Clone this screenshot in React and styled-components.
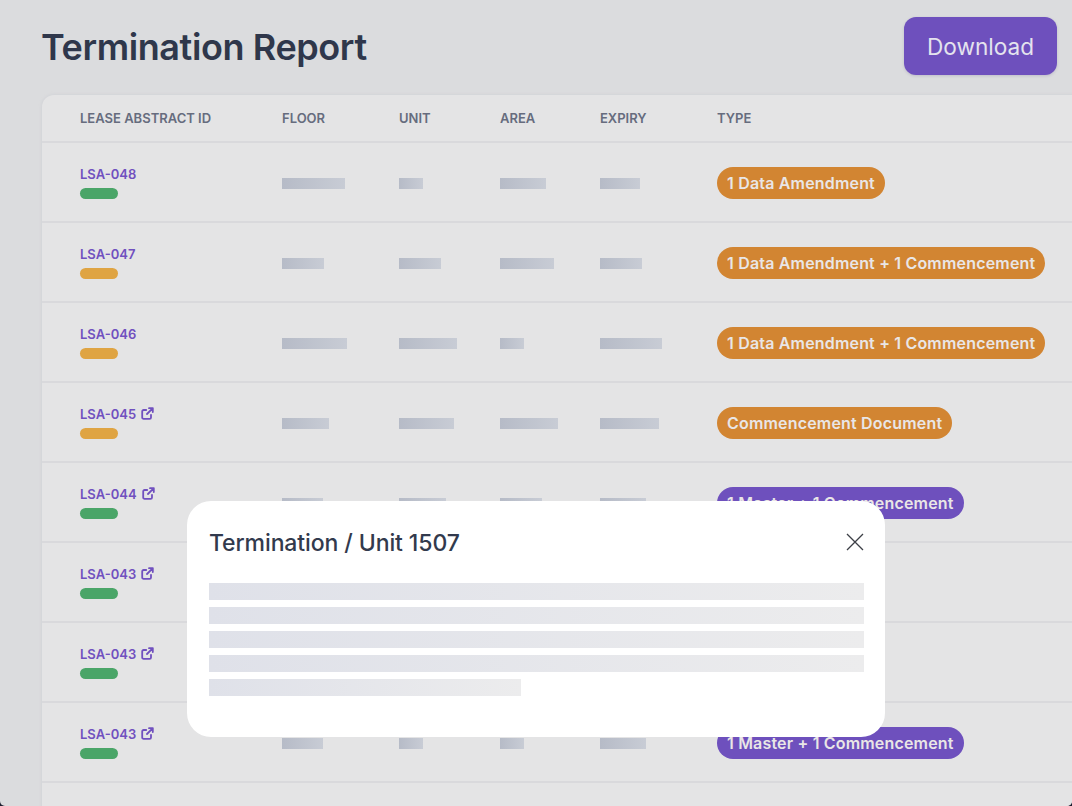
import React from 'react';
import styled, { createGlobalStyle } from 'styled-components';

const rows = [
  { id: 'LSA-048', status: 'green', bars: [63, 24, 46, 40], type: '1 Data Amendment', tone: 'orange' },
  { id: 'LSA-047', status: 'yellow', bars: [42, 42, 54, 42], type: '1 Data Amendment + 1 Commencement', tone: 'orange' },
  { id: 'LSA-046', status: 'yellow', bars: [65, 58, 24, 62], type: '1 Data Amendment + 1 Commencement', tone: 'orange' },
  { id: 'LSA-045', status: 'yellow', link: true, bars: [47, 55, 58, 59], type: 'Commencement Document', tone: 'orange' },
  { id: 'LSA-044', status: 'green', link: true, bars: [41, 47, 42, 46], type: '1 Master + 1 Commencement', tone: 'purple' },
  { id: 'LSA-043', status: 'green', link: true, bars: [41, 47, 42, 46] },
  { id: 'LSA-043', status: 'green', link: true, bars: [41, 24, 24, 46] },
  { id: 'LSA-043', status: 'green', link: true, bars: [41, 24, 24, 46], type: '1 Master + 1 Commencement', tone: 'purple' },
];

function ExternalIcon() {
  return (
    <svg width="13" height="13" viewBox="0 0 13 13" fill="none" stroke="currentColor" strokeWidth="1.8" strokeLinecap="round" strokeLinejoin="round">
      <path d="M5.2 3H2.6A1.4 1.4 0 0 0 1.2 4.4v6A1.4 1.4 0 0 0 2.6 11.8h6A1.4 1.4 0 0 0 10 10.4V7.8" />
      <path d="M8 1.2h3.8V5M11.8 1.2 6 7" />
    </svg>
  );
}

function App() {
  return (
    <>
      <GlobalStyle />
      <Page>
        <Header>
          <Title>Termination Report</Title>
          <DownloadButton>Download</DownloadButton>
        </Header>
        <Table>
          <HeadRow>
            <HeadCell>Lease Abstract ID</HeadCell>
            <HeadCell>Floor</HeadCell>
            <HeadCell>Unit</HeadCell>
            <HeadCell>Area</HeadCell>
            <HeadCell>Expiry</HeadCell>
            <HeadCell>Type</HeadCell>
          </HeadRow>
          {rows.map((row, index) => (
            <Row key={index}>
              <IdCell>
                <LeaseId>
                  {row.id}
                  {row.link && <ExternalIcon />}
                </LeaseId>
                <Status $status={row.status} />
              </IdCell>
              {row.bars.map((width, barIndex) => (
                <Cell key={barIndex}>
                  <Bar style={{ width }} />
                </Cell>
              ))}
              <Cell>
                {row.type && <TypeBadge $tone={row.tone}>{row.type}</TypeBadge>}
              </Cell>
            </Row>
          ))}
          <Row />
        </Table>
        <Modal>
          <ModalHeader>
            <ModalTitle>Termination / Unit 1507</ModalTitle>
            <svg width="18" height="18" viewBox="0 0 18 18" fill="none" stroke="#3c3f46" strokeWidth="1.3">
              <path d="M1 1l16 16M17 1 1 17" />
            </svg>
          </ModalHeader>
          <TextLines>
            <TextLine />
            <TextLine />
            <TextLine />
            <TextLine />
            <TextLine $short />
          </TextLines>
        </Modal>
      </Page>
    </>
  );
}

const GlobalStyle = createGlobalStyle`
  html, body {
    margin: 0;
    padding: 0;
    background: #1d2030;
    overflow: hidden;
  }
  * {
    box-sizing: border-box;
  }
`;

const Page = styled.div`
  position: relative;
  width: 1072px;
  height: 806px;
  overflow: hidden;
  padding-left: 42px;
  border-radius: 0 0 5px 5px;
  background: #dbdcde;
  font-family: Inter, "Noto Sans", sans-serif;
`;

const Header = styled.div`
  display: flex;
  align-items: center;
  justify-content: space-between;
  height: 95px;
  padding: 0 15px 0 0;
`;

const Title = styled.h1`
  margin: 0 0 1px -1px;
  color: #2f374b;
  font-size: 36px;
  font-weight: 600;
  letter-spacing: -0.4px;
`;

const DownloadButton = styled.button`
  width: 153px;
  height: 58px;
  margin-top: -3px;
  border: 0;
  border-radius: 12px;
  background: #6e50bd;
  box-shadow: 0 1px 3px rgba(60, 50, 110, 0.18);
  color: #e4e3ee;
  font-family: inherit;
  font-size: 22.6px;
  font-weight: 400;
`;

const Table = styled.div`
  width: 1040px;
  border-top-left-radius: 12px;
  background: #e4e4e5;
  box-shadow: 0 0 3px 1px #d3d4d8;
`;

const HeadRow = styled.div`
  display: grid;
  grid-template-columns: 240px 117px 101px 100px 117px 1fr;
  align-items: center;
  height: 48px;
  border-bottom: 2px solid #d9d9dc;
`;

const HeadCell = styled.div`
  color: #666c7e;
  font-size: 13px;
  font-weight: 600;
  text-transform: uppercase;
  &:first-child {
    padding-left: 38px;
  }
`;

const Row = styled.div`
  display: grid;
  grid-template-columns: 240px 117px 101px 100px 117px 1fr;
  align-items: center;
  height: 80px;
  border-bottom: 2px solid #d9d9dc;
`;

const Cell = styled.div`
  display: flex;
  align-items: center;
  padding-top: 2px;
`;

const IdCell = styled.div`
  display: flex;
  flex-direction: column;
  gap: 6px;
  padding-left: 38px;
`;

const LeaseId = styled.div`
  display: flex;
  align-items: center;
  gap: 5px;
  height: 16px;
  color: #7050bf;
  font-size: 13px;
  font-weight: 600;
`;

const Status = styled.div`
  width: 38px;
  height: 11px;
  border-radius: 6px;
  background: ${props => (props.$status === 'green' ? '#4aa568' : '#dfa443')};
`;

const Bar = styled.div`
  height: 11px;
  background: linear-gradient(90deg, #b6bbc7, #c8ccd5);
`;

const TypeBadge = styled.div`
  display: flex;
  align-items: center;
  height: 32px;
  padding: 0 10px;
  border-radius: 16px;
  background: ${props => (props.$tone === 'orange' ? '#d28532' : '#6e50bd')};
  color: #e9e6e6;
  font-size: 16px;
  font-weight: 600;
  letter-spacing: 0.18px;
  white-space: nowrap;
`;

const Modal = styled.div`
  position: absolute;
  left: 187px;
  top: 501px;
  width: 698px;
  height: 236px;
  padding: 0 21px 0 22px;
  border-radius: 24px;
  background: #fff;
`;

const ModalHeader = styled.div`
  display: flex;
  align-items: center;
  justify-content: space-between;
  height: 81.5px;
`;

const ModalTitle = styled.h2`
  margin: 2px 0 0;
  color: #323a4d;
  font-size: 23px;
  font-weight: 500;
  letter-spacing: -0.1px;
`;

const TextLines = styled.div`
  display: flex;
  flex-direction: column;
  gap: 6.5px;
`;

const TextLine = styled.div`
  width: ${props => (props.$short ? '312px' : '100%')};
  height: 17.5px;
  background: linear-gradient(90deg, #dfe1e9, #ececed);
`;

export default App;
